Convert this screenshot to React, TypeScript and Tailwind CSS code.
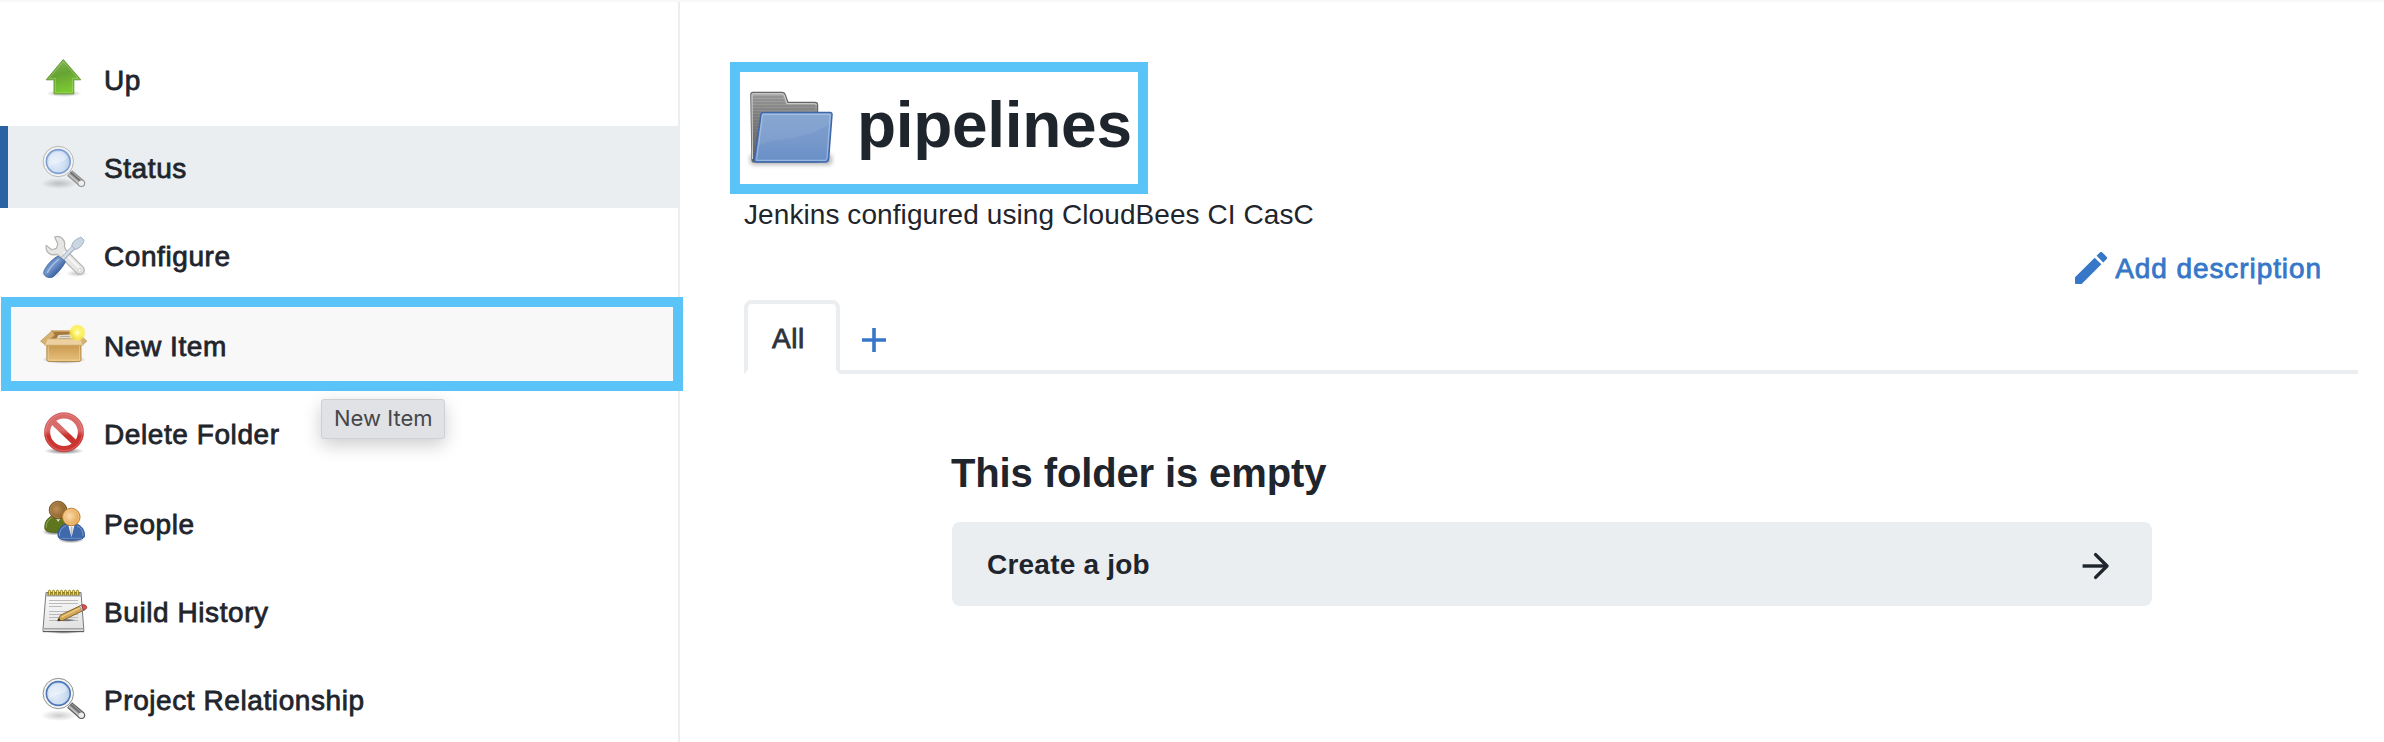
import type { ReactNode } from "react";

function UpIcon() {
  return (
    <svg viewBox="0 0 48 48" className="size-12 shrink-0">
      <defs>
        <linearGradient id="upFill" x1="0" y1="0" x2="0.3" y2="1">
          <stop offset="0" stopColor="#86bb56" />
          <stop offset="0.5" stopColor="#67a334" />
          <stop offset="1" stopColor="#7cc832" />
        </linearGradient>
        <radialGradient id="softShadow">
          <stop offset="0" stopColor="#000" stopOpacity="0.32" />
          <stop offset="1" stopColor="#000" stopOpacity="0" />
        </radialGradient>
      </defs>
      <ellipse cx="24" cy="38.5" rx="18" ry="3.5" fill="url(#softShadow)" />
      <path d="M23.3 4.5 40.8 24.8H33.8V38.9H14V24.8H6.2Z" fill="url(#upFill)" stroke="#6a9c40" strokeWidth="1" strokeLinejoin="round" />
      <path d="M23.3 6.6 38 23.4H32.4V37.6H15.4V23.4H9Z" fill="none" stroke="#b5e07c" strokeOpacity="0.45" strokeWidth="1" />
    </svg>
  );
}

function SearchIcon({ soft = false }: { soft?: boolean }) {
  return (
    <svg viewBox="0 0 48 48" className="size-12 shrink-0">
      <defs>
        <radialGradient id="lens" cx="0.4" cy="0.55" r="0.65">
          <stop offset="0" stopColor="#e6eefa" />
          <stop offset="0.6" stopColor="#cbdcf1" />
          <stop offset="1" stopColor="#a4c0e6" />
        </radialGradient>
        <radialGradient id="lensShadow">
          <stop offset="0" stopColor="#000" stopOpacity="0.2" />
          <stop offset="1" stopColor="#000" stopOpacity="0" />
        </radialGradient>
      </defs>
      <ellipse cx="19" cy="40.5" rx="18.5" ry="5.5" fill="url(#lensShadow)" />
      <path d="M29.6 30 41.4 40.2" stroke={soft ? "#8f8f8f" : "#555"} strokeWidth="7.6" strokeLinecap="butt" />
      <circle cx="41.4" cy="40.2" r="3.8" fill={soft ? "#8f8f8f" : "#555"} />
      <path d="M29.8 30.2 41 39.9" stroke={soft ? "#a3a3a3" : "#9a9a9a"} strokeWidth="5.6" />
      <path d="M29.2 31.6 39 40.1" stroke="#d0d0d0" strokeWidth="1.1" />
      <path d="M30.4 29.4 40.6 38.2" stroke="#6b6b6b" strokeWidth="1.4" />
      <circle cx="41.4" cy="40.2" r="2.7" fill="#ededed" />
      <circle cx="18.3" cy="18.5" r="13.4" fill="url(#lens)" stroke="#f4f4f2" strokeWidth="3.2" />
      <circle cx="18.3" cy="18.5" r="15.2" fill="none" stroke={soft ? "#b0b0b0" : "#858585"} strokeWidth="0.9" />
      <circle cx="18.3" cy="18.5" r="11.9" fill="none" stroke={soft ? "#7d9fd3" : "#4b77b8"} strokeWidth="1.6" />
      <path d="M8.8 18.3C9 7 25 5 27.2 14.4 24 20.4 15 18 8.8 24Z" fill="#fff" fillOpacity="0.34" />
    </svg>
  );
}

function ToolsIcon() {
  return (
    <svg viewBox="0 0 48 48" className="size-12 shrink-0">
      <defs>
        <linearGradient id="blueGrip" x1="0" y1="0" x2="1" y2="1">
          <stop offset="0.2" stopColor="#4a74b6" />
          <stop offset="0.42" stopColor="#7b9ccf" />
          <stop offset="0.7" stopColor="#3a62a4" />
        </linearGradient>
        <radialGradient id="toolShadow">
          <stop offset="0" stopColor="#000" stopOpacity="0.22" />
          <stop offset="1" stopColor="#000" stopOpacity="0" />
        </radialGradient>
      </defs>
      <ellipse cx="11" cy="43" rx="11" ry="3.5" fill="url(#toolShadow)" />
      <ellipse cx="37" cy="42.5" rx="11" ry="3.5" fill="url(#toolShadow)" />
      <path
        d="M14.6 6C20.4 3.8 26 9.2 24.4 15.2L25.4 18.2 43.4 36.4C46 40.4 41.8 45 37.4 42.6L18.8 24.4 16 23.4C10.4 25.4 4.8 20.6 6.2 14.4L11.8 18.8 16.4 17.4 17.8 12.8Z"
        fill="#e6e6e5"
        stroke="#b3b4b2"
        strokeWidth="1.2"
        strokeLinejoin="round"
      />
      <path d="M23.4 21 39.4 37" stroke="#f8f8f8" strokeWidth="1.8" />
      <circle cx="39.6" cy="39.4" r="1.7" fill="#fff" stroke="#bbb" strokeWidth="0.7" />
      <path d="M22.2 28.2 34.6 15.4" stroke="#a9b4c3" strokeWidth="4.6" />
      <path d="M22.4 27.6 34.4 15.2" stroke="#d6dde6" strokeWidth="2.6" />
      <path d="M31.8 15C32 10.4 37.4 7.4 41 6.2L44 9C43.6 12.8 39.8 17.8 35.4 18.4Z" fill="#cbd6e3" stroke="#a3b1c4" strokeWidth="1" />
      <path d="M4 40C6.4 34.4 12.6 27.6 18 25.2L25.6 30.6C22.8 36.4 17 42.8 12.8 46 8 47.8 2.6 44.8 4 40Z" fill="url(#blueGrip)" stroke="#41689f" strokeWidth="0.9" />
      <path d="M7.6 41.4C10 36.6 14.6 31.6 18.6 28.6" fill="none" stroke="#a9c0e4" strokeWidth="1.3" strokeLinecap="round" />
    </svg>
  );
}

function BoxIcon() {
  return (
    <svg viewBox="0 0 48 48" className="size-12 shrink-0">
      <defs>
        <linearGradient id="boxFront" x1="0" y1="0" x2="0" y2="1">
          <stop offset="0" stopColor="#c4944a" />
          <stop offset="1" stopColor="#e8c17c" />
        </linearGradient>
        <radialGradient id="glow">
          <stop offset="0" stopColor="#fffef0" />
          <stop offset="0.3" stopColor="#fff67a" />
          <stop offset="0.75" stopColor="#fbee45" stopOpacity="0.85" />
          <stop offset="1" stopColor="#fbee45" stopOpacity="0" />
        </radialGradient>
        <radialGradient id="boxShadow">
          <stop offset="0.5" stopColor="#000" stopOpacity="0.28" />
          <stop offset="1" stopColor="#000" stopOpacity="0" />
        </radialGradient>
      </defs>
      <ellipse cx="24" cy="38.5" rx="22" ry="4.5" fill="url(#boxShadow)" />
      <path d="M12 10H36L40 21H8Z" fill="#a57a3c" stroke="#cfab6f" strokeWidth="1.4" />
      <path d="M18.6 14 31 13.4 33 18.5H16Z" fill="#e3ddd2" />
      <path d="M20 15.5H30M18 17.5H31" stroke="#a29a8c" strokeWidth="0.7" />
      <path d="M12.4 9.6 0.6 20.2 5 23.4 14.6 14Z" fill="#d9b273" stroke="#b78c4b" strokeWidth="0.7" />
      <path d="M35.6 9.6 46.8 20.2 42.8 23.4 34 14Z" fill="#d9b273" stroke="#b78c4b" strokeWidth="0.7" />
      <path d="M6.8 22H41V38.4Q41 40.5 39 40.5H9Q6.8 40.5 6.8 38.4Z" fill="url(#boxFront)" stroke="#a97f3f" strokeWidth="0.8" />
      <path d="M7.4 17.8H40.4L43.4 24.2H4.4Z" fill="#ecd0a0" stroke="#c9a262" strokeWidth="0.6" />
      <path d="M8.2 25V38.2Q8.2 39.2 9.2 39.2H38.6Q39.6 39.2 39.6 38.2V25" fill="none" stroke="#f3d9a6" strokeOpacity="0.7" strokeWidth="0.9" />
      <circle cx="37.3" cy="11.7" r="8.8" fill="url(#glow)" />
    </svg>
  );
}

function ForbiddenIcon() {
  return (
    <svg viewBox="0 0 48 48" className="size-12 shrink-0">
      <defs>
        <linearGradient id="redRing" gradientUnits="userSpaceOnUse" x1="0" y1="3" x2="0" y2="44">
          <stop offset="0" stopColor="#d96a6a" />
          <stop offset="0.45" stopColor="#da6b6b" />
          <stop offset="0.58" stopColor="#c9302c" />
          <stop offset="1" stopColor="#cf3a36" />
        </linearGradient>
        <radialGradient id="ringShadow">
          <stop offset="0.4" stopColor="#000" stopOpacity="0.35" />
          <stop offset="1" stopColor="#000" stopOpacity="0" />
        </radialGradient>
      </defs>
      <ellipse cx="24" cy="42" rx="20" ry="3.4" fill="url(#ringShadow)" />
      <circle cx="24" cy="23.3" r="16.8" fill="#fff" />
      <circle cx="24" cy="23.3" r="16.8" fill="none" stroke="url(#redRing)" strokeWidth="6" />
      <path d="M12.5 12.3 35.5 34.3" stroke="url(#redRing)" strokeWidth="6" />
      <circle cx="24" cy="23.3" r="19.5" fill="none" stroke="#bd4a4a" strokeOpacity="0.6" strokeWidth="0.8" />
      <circle cx="24" cy="23.3" r="18.3" fill="none" stroke="#f0a2a0" strokeOpacity="0.5" strokeWidth="0.8" />
    </svg>
  );
}

function PeopleIcon() {
  return (
    <svg viewBox="0 0 48 48" className="size-12 shrink-0">
      <defs>
        <radialGradient id="headBrown" cx="0.4" cy="0.45" r="0.6">
          <stop offset="0" stopColor="#bd9155" />
          <stop offset="1" stopColor="#855b27" />
        </radialGradient>
        <radialGradient id="headOrange" cx="0.4" cy="0.45" r="0.6">
          <stop offset="0" stopColor="#fbdcae" />
          <stop offset="1" stopColor="#e3a047" />
        </radialGradient>
        <radialGradient id="peopleShadow">
          <stop offset="0.4" stopColor="#000" stopOpacity="0.4" />
          <stop offset="1" stopColor="#000" stopOpacity="0" />
        </radialGradient>
      </defs>
      <ellipse cx="15" cy="33" rx="13" ry="3.5" fill="url(#peopleShadow)" />
      <ellipse cx="31" cy="41" rx="13" ry="3.2" fill="url(#peopleShadow)" />
      <path d="M4.8 29C4.4 22 9 17.4 13 17H23C28 19 31 24 31 29 30 33 24 33.4 17 33.4 9 33.4 5 32.6 4.8 29Z" fill="#5f761f" stroke="#4b5d18" strokeWidth="0.9" />
      <path d="M6.2 28.6C6 23 9.6 19.4 12.4 18.6" fill="none" stroke="#9db15a" strokeWidth="0.9" />
      <path d="M15.6 19 18.2 23 20.8 19Z" fill="#dfe6cf" />
      <circle cx="18" cy="11" r="8.8" fill="url(#headBrown)" stroke="#71501f" strokeWidth="0.9" />
      <circle cx="18" cy="11" r="7.6" fill="none" stroke="#c8a56c" strokeOpacity="0.5" strokeWidth="0.7" />
      <path d="M18 37C17.4 30 22 26 26 25.2H37C41 26.4 45 31 44.5 37 44 40.6 38 41.2 31 41.2 24 41.2 18.4 40.6 18 37Z" fill="#4069ab" stroke="#2c5492" strokeWidth="0.9" />
      <path d="M19.5 36.8C19.2 31.6 22.2 28 26 26.8M43 36.8C43.2 31.6 40 28 37 26.8" fill="none" stroke="#86a5d4" strokeWidth="0.9" />
      <path d="M20.6 39.4H42" stroke="#7698cc" strokeWidth="0.7" />
      <path d="M28.4 26.5H34.4L31.5 38Z" fill="#fafafa" />
      <path d="M30.6 28H32.4L32.5 34 31.4 38 30.6 34Z" fill="#b9bdc4" />
      <circle cx="31.3" cy="18" r="8.8" fill="url(#headOrange)" stroke="#b97c2e" strokeWidth="0.9" />
      <circle cx="31.3" cy="18" r="7.6" fill="none" stroke="#fbdfb4" strokeOpacity="0.6" strokeWidth="0.7" />
    </svg>
  );
}

const RINGS = [9.5, 13.5, 17.5, 21.5, 25.5, 29.5, 33.5, 37.5];

function NotepadIcon() {
  return (
    <svg viewBox="0 0 48 48" className="size-12 shrink-0">
      <defs>
        <linearGradient id="paper" x1="0" y1="0" x2="0.2" y2="1">
          <stop offset="0" stopColor="#fdfdfd" />
          <stop offset="1" stopColor="#e2e2e2" />
        </linearGradient>
        <radialGradient id="padShadow">
          <stop offset="0.4" stopColor="#000" stopOpacity="0.4" />
          <stop offset="1" stopColor="#000" stopOpacity="0" />
        </radialGradient>
      </defs>
      <ellipse cx="23.5" cy="44.4" rx="18" ry="2.6" fill="url(#padShadow)" />
      <path d="M6 5.5H41L43.8 42.5V44.6H3V42.5Z" fill="url(#paper)" stroke="#7a7a7a" strokeWidth="1" strokeLinejoin="round" />
      <path d="M6.4 6H40.6L40.9 9.4H6.2Z" fill="#a8a8a4" />
      <path d="M4 41.8H43" stroke="#a3a3a3" strokeWidth="1.6" />
      <path d="M3 44.6H43.8" stroke="#555" strokeWidth="0.9" />
      <path d="M9 13.5H38M9 16.5H38M9 19.5H22M9 24.5H38M9 27.5H38M9 30.5H38M9 33.5H38" stroke="#b4b4b4" strokeWidth="0.9" />
      {RINGS.map((x) => (
        <rect key={x} x={x - 1.1} y="3.2" width="2.2" height="5.2" rx="1.1" fill="#f3e169" stroke="#8d7a14" strokeWidth="0.9" />
      ))}
      <ellipse cx="26" cy="33" rx="10" ry="1.8" fill="url(#padShadow)" />
      <path d="M17.6 33.8 20.4 28.2 42.2 17.8 44.6 22.8 22.8 33.4Z" fill="#d3a755" stroke="#7a5a22" strokeWidth="0.9" strokeLinejoin="round" />
      <path d="M21.6 30 42 20" stroke="#efd08c" strokeWidth="1.2" />
      <path d="M17.6 33.8 19 31 20.6 33.5Z" fill="#222" />
      <path d="M39.4 19.2 42.2 17.8 44.6 22.8 41.8 24.1Z" fill="#c9ccd2" stroke="#7d7d7d" strokeWidth="0.6" />
      <path d="M42 18C45.4 16.4 49 20.6 45 22.6L43 23.2Z" fill="#e2504a" stroke="#93302c" strokeWidth="0.8" />
    </svg>
  );
}

function FolderIcon() {
  return (
    <svg viewBox="0 0 96 96" className="size-24 shrink-0">
      <defs>
        <linearGradient id="folderBack" x1="0" y1="0" x2="0" y2="1">
          <stop offset="0" stopColor="#ababab" />
          <stop offset="0.35" stopColor="#858585" />
          <stop offset="1" stopColor="#5e5e5e" />
        </linearGradient>
        <linearGradient id="folderFront" x1="0" y1="0" x2="0" y2="1">
          <stop offset="0" stopColor="#88a8d2" />
          <stop offset="0.55" stopColor="#809fce" />
          <stop offset="1" stopColor="#6b92ca" />
        </linearGradient>
        <filter id="folderBlur" x="-10%" y="-60%" width="120%" height="220%">
          <feGaussianBlur stdDeviation="2" />
        </filter>
      </defs>
      <rect x="6" y="74" width="82" height="11" rx="4" fill="#000" fillOpacity="0.28" filter="url(#folderBlur)" />
      <path d="M9.5 82Q8 82 8 79.5L6.8 14.5Q6.8 12.4 9 12.4H38.5Q40.6 12.4 41.3 14.6L44 22.4H71Q73.6 22.4 73.6 25V82Z" fill="url(#folderBack)" stroke="#666" strokeWidth="1.2" />
      <path d="M8.5 79 8 15Q8 13.7 9.4 13.7H38Q39.6 13.7 40.2 15.2L43 23.7H70.8Q72.3 23.7 72.3 25.2" fill="none" stroke="#d0d0d0" strokeWidth="1" />
      <path d="M9 17H39M9 20H40M9 23H41M9 26H71M9 29H71M9 32H17M9 35H16M9 38H16M9 41H16M9 44H15M9 47H15M9 50H15M9 53H14M9 56H14M9 59H14" stroke="#666" strokeOpacity="0.5" strokeWidth="1" />
      <path d="M19 32.6H86.2Q88.2 32.6 88 34.8L84.6 78.6Q84.3 82 81.4 82H12.4Q10.2 82 10.5 79.6L17 34.4Q17.3 32.6 19 32.6Z" fill="url(#folderFront)" stroke="#3c68aa" strokeWidth="1.5" />
      <path d="M19.6 34.3H86.2L82.9 78.4Q82.6 80.3 81 80.3H12.6L18.4 35.6Q18.6 34.3 19.6 34.3Z" fill="none" stroke="#b7cdea" strokeOpacity="0.6" strokeWidth="1.2" />
      <path d="M14.6 66C34 56 60 62 85 44L82.5 79.5H13Z" fill="#5e87c4" fillOpacity="0.25" />
    </svg>
  );
}

function SideLink({ icon, label, className = "" }: { icon: ReactNode; label: string; className?: string }) {
  return (
    <li className={`flex h-[82px] items-center gap-4 pl-10 ${className}`}>
      {icon}
      <span className="pt-1 text-[28px] leading-7 tracking-[0.58px] [-webkit-text-stroke:0.8px_currentColor]">{label}</span>
    </li>
  );
}

export default function App() {
  return (
    <div className="relative flex h-[742px] w-[2384px] flex-col overflow-hidden bg-white font-['Liberation_Sans',Arial,sans-serif] text-[#1f252c]">
      <div className="h-[2px] shrink-0 bg-[#f8f8f8]" />
      <div className="flex flex-1">
        <aside className="w-[680px] shrink-0 border-r-2 border-[#eaeef1] pt-9">
          <ul className="flex flex-col">
            <SideLink icon={<UpIcon />} label="Up" />
            <SideLink icon={<SearchIcon soft />} label="Status" className="mt-1.5 bg-[#eaeef1] bg-[linear-gradient(#2a62a2,#2a62a2)] bg-[length:8px_100%] bg-no-repeat" />
            <SideLink icon={<ToolsIcon />} label="Configure" className="mt-1.5" />
            <SideLink icon={<BoxIcon />} label="New Item" className="mt-2 bg-[#f8f8f8]" />
            <SideLink icon={<ForbiddenIcon />} label="Delete Folder" className="mt-1.5" />
            <SideLink icon={<PeopleIcon />} label="People" className="mt-2" />
            <SideLink icon={<NotepadIcon />} label="Build History" className="mt-1.5" />
            <SideLink icon={<SearchIcon />} label="Project Relationship" className="mt-1.5" />
          </ul>
        </aside>

        <main className="flex flex-1 flex-col pr-[26px] pl-16 pt-[60px]">
          <h1 className="-ml-3.5 flex h-[132px] w-[418px] items-start border-[10px] border-[#5ac4f9] pt-2 pl-1">
            <FolderIcon />
            <span className="mt-[13px] ml-[17px] text-[64px] leading-[64px] font-bold tracking-[-0.3px]">pipelines</span>
          </h1>
          <p className="mt-[7px] text-[28px] leading-7 tracking-[0.08px]">Jenkins configured using CloudBees CI CasC</p>

          <a className="mt-[23px] flex h-8 items-center justify-end gap-2 pr-9 text-[#3777c8]">
            <svg viewBox="3 3 18 18" className="size-8" fill="currentColor">
              <path d="M3 17.46v3.04c0 .28.22.5.5.5h3.04c.13 0 .26-.05.35-.15L17.81 9.94l-3.75-3.75L3.15 17.1c-.1.1-.15.22-.15.36zM20.71 7.04a.996.996 0 0 0 0-1.41l-2.34-2.34a.996.996 0 0 0-1.41 0l-1.83 1.83 3.75 3.75 1.83-1.83z" />
            </svg>
            <span className="pt-0.5 text-[28px] leading-8 tracking-[0.92px] [-webkit-text-stroke:0.8px_currentColor]">Add description</span>
          </a>

          <div className="mt-4 flex h-[74px]">
            <div className="w-24 rounded-t-lg border-4 border-[#eaeef1] border-b-white pt-[21px] pl-6 text-[28px] leading-7 tracking-[0.5px] text-[#2c333b] [-webkit-text-stroke:0.8px_currentColor]">
              All
            </div>
            <div className="flex flex-1 items-start border-b-4 border-[#eaeef1] pt-7 pl-[22px]">
              <svg viewBox="0 0 24 24" className="size-6 text-[#3777c8]" fill="none" stroke="currentColor" strokeWidth="3.6">
                <path d="M12 0V24M0 12H24" />
              </svg>
            </div>
          </div>

          <section className="mt-[79px] ml-52 w-[1200px]">
            <h2 className="-ml-px text-[40px] leading-10 font-bold tracking-[-0.13px]">This folder is empty</h2>
            <a className="mt-[29px] flex h-21 items-center justify-between rounded-lg bg-[#eaeef1] pr-[42px] pl-[35px] text-[28px] leading-7 font-bold tracking-[0.22px]">
              <span className="pt-0.5">Create a job</span>
              <svg viewBox="0 0 28 28" className="mt-1 size-7" fill="none" stroke="currentColor" strokeWidth="3.4" strokeLinejoin="round">
                <path d="M0.6 14H25" />
                <path d="M13.6 2.6 25 14 13.6 25.4" strokeLinecap="round" />
              </svg>
            </a>
          </section>
        </main>
      </div>

      <div className="absolute top-[297px] left-px h-[94px] w-[682px] border-[10px] border-[#5ac4f9]" />
      <div className="absolute top-[399px] left-[321px] h-10 w-[124px] rounded-[3px] border border-[#cfd0d3] bg-[#e1e2e6] pl-3 font-['Inter',sans-serif] text-[22px] leading-[37px] whitespace-nowrap text-[#474749] shadow-[0_6px_18px_rgba(0,0,0,0.2)]">
        New Item
      </div>
    </div>
  );
}
